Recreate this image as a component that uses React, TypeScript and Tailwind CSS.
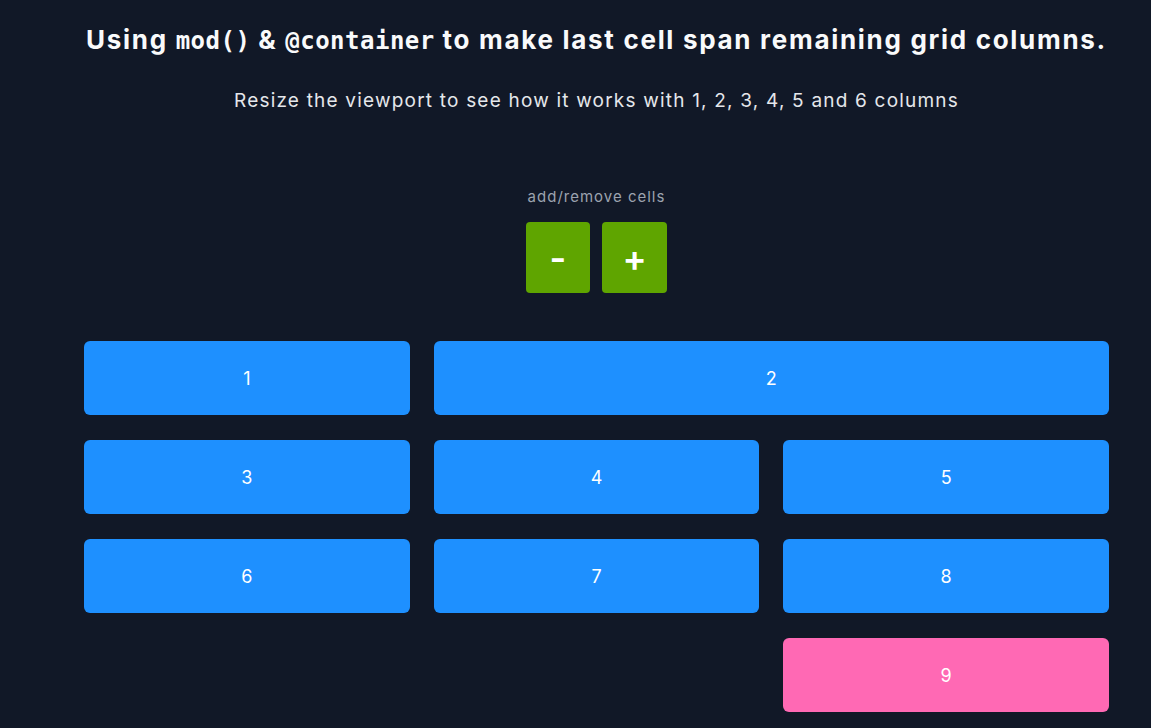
const cells = [1, 2, 3, 4, 5, 6, 7, 8];

export default function App() {
  return (
    <div className="min-h-screen bg-[#111827] pl-[84px] pr-[42px] text-[#f3f4f6]" style={{ fontFamily: "Inter, 'Noto Sans', sans-serif" }}>
      <h1 className="pt-[23px] text-center text-[26px] font-bold leading-[34px] tracking-[1.7px] text-[#f9fafb]">
        Using <code className="font-['DejaVu_Sans_Mono',monospace] text-[24px] tracking-[0.5px]">mod()</code> &amp;{" "}
        <code className="font-['DejaVu_Sans_Mono',monospace] text-[24px] tracking-[0.5px]">@container</code> to make last cell span remaining grid columns.
      </h1>
      <p className="mt-[29px] text-center text-[19px] leading-[28px] tracking-[1.2px] text-[#e5e7eb]">
        Resize the viewport to see how it works with 1, 2, 3, 4, 5 and 6 columns
      </p>

      <div className="mt-[72px] flex flex-col items-center">
        <span className="text-[15px] leading-[20px] tracking-[1px] text-[#9ca3af]">add/remove cells</span>
        <div className="mt-[15px] flex gap-[12px]">
          <button className="flex h-[71px] w-[64px] items-center justify-center rounded-[4px] bg-[#5fa500] text-[36px] font-semibold text-white">
            -
          </button>
          <button className="flex h-[71px] w-[65px] items-center justify-center rounded-[4px] bg-[#5fa500] text-[36px] font-semibold text-white">
            +
          </button>
        </div>
      </div>

      <div className="mt-[48px] grid grid-cols-3 gap-x-[24px] gap-y-[25px] pb-[16px]">
        {cells.map((n) => (
          <div
            key={n}
            className={
              n === 2
                ? "col-span-2 flex h-[74px] items-center justify-center rounded-[6px] bg-[#1e90ff] text-[18px] text-white"
                : "flex h-[74px] items-center justify-center rounded-[6px] bg-[#1e90ff] text-[18px] text-white"
            }
          >
            {n}
          </div>
        ))}
        <div className="col-start-3 flex h-[74px] items-center justify-center rounded-[6px] bg-[#ff69b4] text-[18px] text-white">
          9
        </div>
      </div>
    </div>
  );
}
